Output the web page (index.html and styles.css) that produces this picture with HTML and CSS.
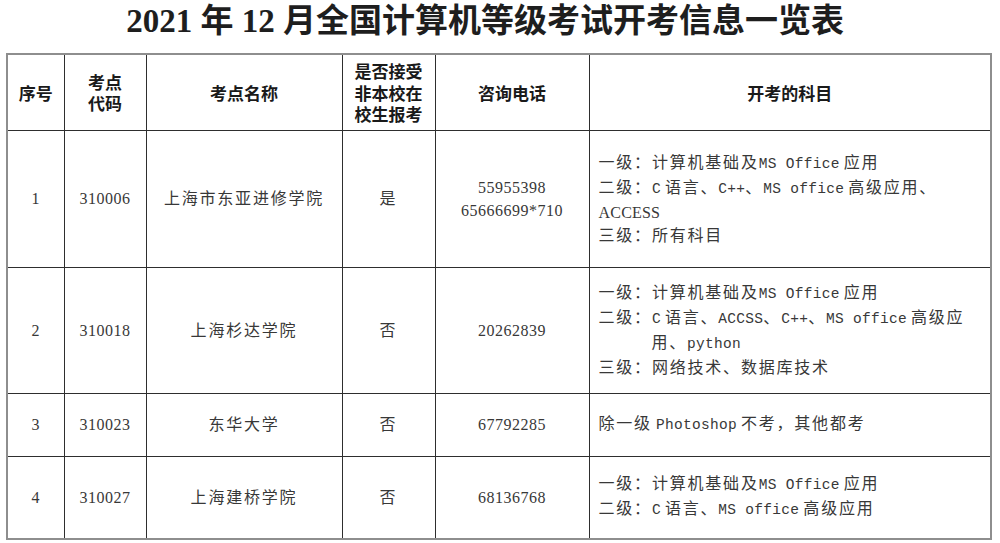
FILE: index.html
```html
<!DOCTYPE html>
<html lang="zh-CN">
<head>
<meta charset="utf-8">
<title>2021年12月全国计算机等级考试开考信息一览表</title>
<link rel="stylesheet" href="styles.css">
</head>
<body>
<h1 class="title">2021 年 12 月全国计算机等级考试开考信息一览表</h1>
<table class="exam">
  <colgroup>
    <col class="c1"><col class="c2"><col class="c3"><col class="c4"><col class="c5"><col class="c6">
  </colgroup>
  <thead>
    <tr class="head">
      <th>序号</th>
      <th><span class="hl">考点</span><span class="hl">代码</span></th>
      <th>考点名称</th>
      <th><span class="hl">是否接受</span><span class="hl">非本校在</span><span class="hl">校生报考</span></th>
      <th>咨询电话</th>
      <th>开考的科目</th>
    </tr>
  </thead>
  <tbody>
    <tr class="r1">
      <td class="num">1</td>
      <td class="num">310006</td>
      <td class="cn">上海市东亚进修学院</td>
      <td class="cn">是</td>
      <td class="num phone">55955398<br>65666699*710</td>
      <td class="subj">
        <div class="line">一级：计算机基础及<span class="lat gr">MS Office</span>应用</div>
        <div class="line">二级：<span class="lat gr">C</span>语言、<span class="lat">C++</span>、<span class="lat gr">MS office</span>高级应用、</div>
        <div class="line"><span class="lat2">ACCESS</span></div>
        <div class="line">三级：所有科目</div>
      </td>
    </tr>
    <tr class="r2">
      <td class="num">2</td>
      <td class="num">310018</td>
      <td class="cn">上海杉达学院</td>
      <td class="cn">否</td>
      <td class="num">20262839</td>
      <td class="subj">
        <div class="line">一级：计算机基础及<span class="lat gr">MS Office</span>应用</div>
        <div class="line">二级：<span class="lat gr">C</span>语言、<span class="lat">ACCSS</span>、<span class="lat">C++</span>、<span class="lat gr">MS office</span>高级应</div>
        <div class="line indent">用、<span class="lat">python</span></div>
        <div class="line">三级：网络技术、数据库技术</div>
      </td>
    </tr>
    <tr class="r3">
      <td class="num">3</td>
      <td class="num">310023</td>
      <td class="cn">东华大学</td>
      <td class="cn">否</td>
      <td class="num">67792285</td>
      <td class="subj">
        <div class="line">除一级<span class="lat gl gr">Photoshop</span>不考，其他都考</div>
      </td>
    </tr>
    <tr class="r4">
      <td class="num">4</td>
      <td class="num">310027</td>
      <td class="cn">上海建桥学院</td>
      <td class="cn">否</td>
      <td class="num">68136768</td>
      <td class="subj">
        <div class="line">一级：计算机基础及<span class="lat gr">MS Office</span>应用</div>
        <div class="line">二级：<span class="lat gr">C</span>语言、<span class="lat gr">MS office</span>高级应用</div>
      </td>
    </tr>
  </tbody>
</table>
</body>
</html>
```

FILE: styles.css
```css
body {
  margin: 0;
  background: #ffffff;
  color: #383838;
  font-family: "Liberation Serif", "Noto Sans CJK SC", serif;
}

.title {
  margin: 0;
  height: 53px;
  line-height: 43px;
  font-size: 33px;
  font-weight: 700;
  text-align: center;
  padding-right: 30px;
  color: #1e1e1e;
  white-space: nowrap;
}

.exam {
  margin-left: 6px;
  border-collapse: collapse;
  table-layout: fixed;
  width: 986px;
  border: 2px solid #8e8e8e;
}

.c1 { width: 57px; }
.c2 { width: 82px; }
.c3 { width: 196px; }
.c4 { width: 93px; }
.c5 { width: 154px; }
.c6 { width: 402px; }

.exam th,
.exam td {
  border: 1px solid #2e2e2e;
  padding: 0;
  text-align: center;
  vertical-align: middle;
}

.exam th {
  font-family: "Noto Sans CJK SC", sans-serif;
  font-size: 17px;
  font-weight: 600;
  line-height: 21.5px;
  color: #1a1a1a;
}

.hl {
  display: block;
  height: 21.5px;
  line-height: 21.5px;
}

.head { height: 76px; }
.r1 { height: 137px; }
.r2 { height: 126px; }
.r3 { height: 63px; }
.r4 { height: 83px; }

.num {
  font-family: "Liberation Serif", serif;
  font-size: 16px;
  letter-spacing: 0.5px;
  line-height: 23px;
}

.cn {
  font-size: 16px;
  letter-spacing: 1.8px;
  line-height: 23px;
}

.subj {
  text-align: left !important;
  padding-left: 9px !important;
  font-size: 16px;
  letter-spacing: 1.8px;
  line-height: 23px;
}

.line {
  white-space: nowrap;
}

.indent {
  padding-left: 53px;
}

.lat {
  font-family: "Liberation Mono", monospace;
  font-size: 14.5px;
  letter-spacing: 0.3px;
}

.gr { margin-right: 4px; }
.gl { margin-left: 4px; }

.lat2 {
  font-family: "Liberation Serif", serif;
  font-size: 16px;
  letter-spacing: 0.2px;
}
```
